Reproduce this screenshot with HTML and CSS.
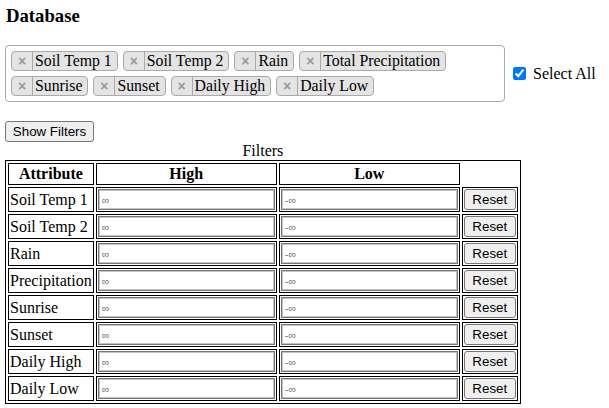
FILE: index.html
```html
<!DOCTYPE html>
<html>
<head>
<meta charset="utf-8">
<title>Database</title>
<link rel="stylesheet" href="styles.css">
</head>
<body>
<h3 class="title">Database</h3>
<div class="select-row">
  <div class="multi">
    <span class="tag"><span class="tag-x">×</span><span class="tag-label">Soil Temp 1</span></span>
    <span class="tag"><span class="tag-x">×</span><span class="tag-label">Soil Temp 2</span></span>
    <span class="tag"><span class="tag-x">×</span><span class="tag-label">Rain</span></span>
    <span class="tag"><span class="tag-x">×</span><span class="tag-label">Total Precipitation</span></span>
    <span class="tag"><span class="tag-x">×</span><span class="tag-label">Sunrise</span></span>
    <span class="tag"><span class="tag-x">×</span><span class="tag-label">Sunset</span></span>
    <span class="tag"><span class="tag-x">×</span><span class="tag-label">Daily High</span></span>
    <span class="tag"><span class="tag-x">×</span><span class="tag-label">Daily Low</span></span>
  </div>
  <label class="select-all"><input type="checkbox" class="check" checked><span class="select-text">Select All</span></label>
</div>
<button class="btn show-btn" type="button">Show Filters</button>
<table class="filters">
  <caption>Filters</caption>
  <thead>
    <tr><th>Attribute</th><th>High</th><th>Low</th></tr>
  </thead>
  <tbody>
    <tr><td>Soil Temp 1</td><td><input class="field" type="text" placeholder="∞"></td><td><input class="field" type="text" placeholder="-∞"></td><td><button class="btn reset-btn" type="button">Reset</button></td></tr>
    <tr><td>Soil Temp 2</td><td><input class="field" type="text" placeholder="∞"></td><td><input class="field" type="text" placeholder="-∞"></td><td><button class="btn reset-btn" type="button">Reset</button></td></tr>
    <tr><td>Rain</td><td><input class="field" type="text" placeholder="∞"></td><td><input class="field" type="text" placeholder="-∞"></td><td><button class="btn reset-btn" type="button">Reset</button></td></tr>
    <tr><td>Precipitation</td><td><input class="field" type="text" placeholder="∞"></td><td><input class="field" type="text" placeholder="-∞"></td><td><button class="btn reset-btn" type="button">Reset</button></td></tr>
    <tr><td>Sunrise</td><td><input class="field" type="text" placeholder="∞"></td><td><input class="field" type="text" placeholder="-∞"></td><td><button class="btn reset-btn" type="button">Reset</button></td></tr>
    <tr><td>Sunset</td><td><input class="field" type="text" placeholder="∞"></td><td><input class="field" type="text" placeholder="-∞"></td><td><button class="btn reset-btn" type="button">Reset</button></td></tr>
    <tr><td>Daily High</td><td><input class="field" type="text" placeholder="∞"></td><td><input class="field" type="text" placeholder="-∞"></td><td><button class="btn reset-btn" type="button">Reset</button></td></tr>
    <tr><td>Daily Low</td><td><input class="field" type="text" placeholder="∞"></td><td><input class="field" type="text" placeholder="-∞"></td><td><button class="btn reset-btn" type="button">Reset</button></td></tr>
  </tbody>
</table>
</body>
</html>
```
FILE: styles.css
```css
html, body {
  margin: 0;
  background: #fff;
}
body {
  padding: 5px;
  font-family: "Liberation Serif", "Times New Roman", serif;
  font-size: 16px;
  color: #000;
}
.title {
  margin: 0 0 19px 1px;
  font-size: 18.72px;
  font-weight: bold;
  line-height: 21px;
}
.select-row {
  display: flex;
  align-items: center;
}
.multi {
  box-sizing: border-box;
  width: 500px;
  border: 1px solid #aaa;
  border-radius: 4px;
  padding: 5px;
  display: flex;
  flex-wrap: wrap;
  gap: 5px;
}
.tag {
  display: inline-flex;
  background: #e4e4e4;
  border: 1px solid #aaa;
  border-radius: 4px;
  line-height: 18px;
  height: 18px;
}
.tag-x {
  box-sizing: border-box;
  width: 21px;
  border-right: 1px solid #aaa;
  color: #999;
  font-family: "Liberation Sans", Arial, sans-serif;
  font-weight: bold;
  font-size: 14px;
  text-align: center;
}
.tag-label {
  padding: 0 5px 0 2px;
  font-size: 15.8px;
}
.select-all {
  margin-left: 4px;
  display: inline-flex;
  align-items: center;
}
.check {
  margin: 0 7px 1px 4px;
  width: 13px;
  height: 13px;
  accent-color: #0075ff;
}
.select-text {
  padding-top: 1px;
}
.btn {
  font-family: "Liberation Sans", Arial, sans-serif;
  font-size: 13.333px;
  background: #efefef;
  border: 1px solid #767676;
  border-radius: 3px;
  color: #000;
  padding: 1px 6px;
  height: 21px;
  box-sizing: border-box;
}
.show-btn {
  display: block;
  margin-top: 19px;
  width: 89px;
}
.filters {
  border: 1px solid #000;
  border-spacing: 2px;
}
.filters caption {
  line-height: 18px;
}
.filters th,
.filters td {
  border: 1px solid #000;
  padding: 1px;
  text-align: left;
  vertical-align: middle;
  white-space: nowrap;
}
.filters th {
  text-align: center;
  font-weight: bold;
  line-height: 18px;
}
.field {
  display: block;
  box-sizing: border-box;
  width: 177px;
  height: 21px;
  margin: 0;
  border: 1px solid #767676;
  box-shadow: inset 0 0 0 1px #c4c4c4;
  padding: 1px 3px;
  font-family: "Liberation Sans", Arial, sans-serif;
  font-size: 13.333px;
}
.field::placeholder {
  color: #757575;
  font-size: 11px;
}
.reset-btn {
  display: block;
  width: 52px;
  margin: 0;
}
```
